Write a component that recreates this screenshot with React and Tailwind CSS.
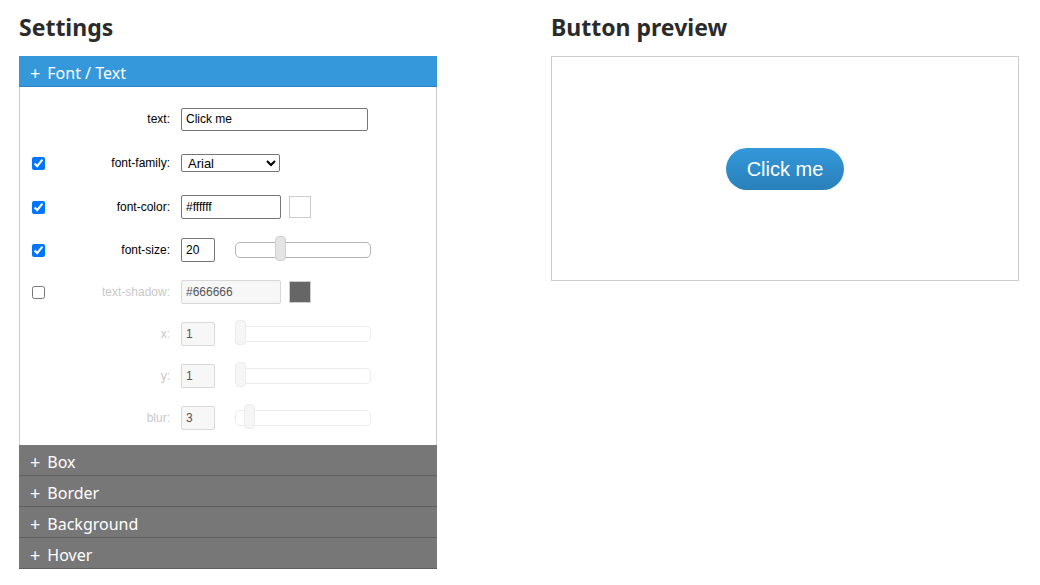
import React from 'react';

const AccHeader = ({ label, active }) => (
    <div
        className={`h-[31px] flex items-center pl-[11px] pt-[3px] text-[16px] text-white border-b ${active ? 'bg-[#3498db] border-[#2a80bd]' : 'bg-[#777777] border-[#5f5f5f]'}`}
        style={{ fontFamily: '"Noto Sans", "Open Sans", sans-serif' }}
    >
        <span className="mr-[7px] text-[18px] leading-none">+</span>
        <span>{label}</span>
    </div>
);

const Row = ({ h, check, label, disabled, children }) => (
    <div className={`flex items-center ${h}`}>
        <div className="w-[33px] pl-[12px] flex items-center">
            {check !== undefined && (
                <input type="checkbox" defaultChecked={check} className="w-[13px] h-[13px] m-0 accent-[#0075ff]" />
            )}
        </div>
        <div className={`w-[117px] text-right text-[12px] ${disabled ? 'text-[#c8c8c8]' : 'text-black'}`}>{label}</div>
        <div className="ml-[11px] flex items-center">{children}</div>
    </div>
);

const TextBox = ({ value, w, h, disabled }) => (
    <input
        type="text"
        defaultValue={value}
        disabled={disabled}
        className={`${w} ${h} px-[4px] text-[12px] border rounded-[2px] outline-none ${disabled ? 'bg-[#f7f7f7] border-[#d8d8d8] text-[#555]' : 'bg-white border-[#767676] text-black'}`}
    />
);

// jQuery-UI style slider: rounded track with a tall rectangular handle
const Slider = ({ pos, disabled }) => (
    <div className={`relative ml-[20px] w-[136px] h-[16px] rounded-[5px] border bg-white ${disabled ? 'border-[#ececec]' : 'border-[#b4b4b4]'}`}>
        <div
            className={`absolute top-[-7px] w-[11px] h-[25px] rounded-[4px] border ${disabled ? 'bg-[#f6f6f6] border-[#ececec]' : 'bg-[#e4e4e4] border-[#cfcfcf]'}`}
            style={{ left: pos }}
        />
    </div>
);

const Swatch = ({ color }) => (
    <div className={`ml-[8px] w-[22px] h-[22px] border border-[#ccc] ${color}`} />
);

export default function App() {
    return (
        <div className="w-[1040px] h-[585px] bg-white flex gap-[114px] pl-[19px] pt-[11px]" style={{ fontFamily: '"Liberation Sans", Arial, sans-serif' }}>
            <div className="w-[418px]">
                <h1 className="text-[23px] font-bold text-[#2b2b2b] h-[45px] leading-[32px]" style={{ fontFamily: '"Noto Sans", "Open Sans", sans-serif' }}>Settings</h1>
                <AccHeader label="Font / Text" active />
                <div className="border-x border-[#cccccc] pt-[10px] pb-[6px]">
                    <Row h="h-[44px]" label="text:">
                        <TextBox value="Click me" w="w-[187px]" h="h-[23px]" />
                    </Row>
                    <Row h="h-[44px]" check label="font-family:">
                        <select defaultValue="Arial" className="w-[99px] h-[18px] text-[13px] border border-[#767676] rounded-[2px] pl-[2px] bg-white">
                            <option>Arial</option>
                            <option>Verdana</option>
                            <option>Georgia</option>
                        </select>
                    </Row>
                    <Row h="h-[44px]" check label="font-color:">
                        <TextBox value="#ffffff" w="w-[100px]" h="h-[24px]" />
                        <Swatch color="bg-white" />
                    </Row>
                    <Row h="h-[42px]" check label="font-size:">
                        <TextBox value="20" w="w-[34px]" h="h-[24px]" />
                        <Slider pos={39} />
                    </Row>
                    <Row h="h-[42px]" check={false} label="text-shadow:" disabled>
                        <TextBox value="#666666" w="w-[100px]" h="h-[24px]" disabled />
                        <Swatch color="bg-[#666666]" />
                    </Row>
                    <Row h="h-[42px]" label="x:" disabled>
                        <TextBox value="1" w="w-[34px]" h="h-[24px]" disabled />
                        <Slider pos={-1} disabled />
                    </Row>
                    <Row h="h-[42px]" label="y:" disabled>
                        <TextBox value="1" w="w-[34px]" h="h-[24px]" disabled />
                        <Slider pos={-1} disabled />
                    </Row>
                    <Row h="h-[42px]" label="blur:" disabled>
                        <TextBox value="3" w="w-[34px]" h="h-[24px]" disabled />
                        <Slider pos={8} disabled />
                    </Row>
                </div>
                <AccHeader label="Box" />
                <AccHeader label="Border" />
                <AccHeader label="Background" />
                <AccHeader label="Hover" />
            </div>
            <div className="w-[468px]">
                <h1 className="text-[23px] font-bold text-[#2b2b2b] h-[45px] leading-[32px]" style={{ fontFamily: '"Noto Sans", "Open Sans", sans-serif' }}>Button preview</h1>
                <div className="h-[225px] border border-[#cccccc] flex items-center justify-center">
                    <button className="h-[42px] px-[21px] rounded-full text-white text-[20px] bg-gradient-to-b from-[#3498db] to-[#2980b9]">
                        Click me
                    </button>
                </div>
            </div>
        </div>
    );
}
